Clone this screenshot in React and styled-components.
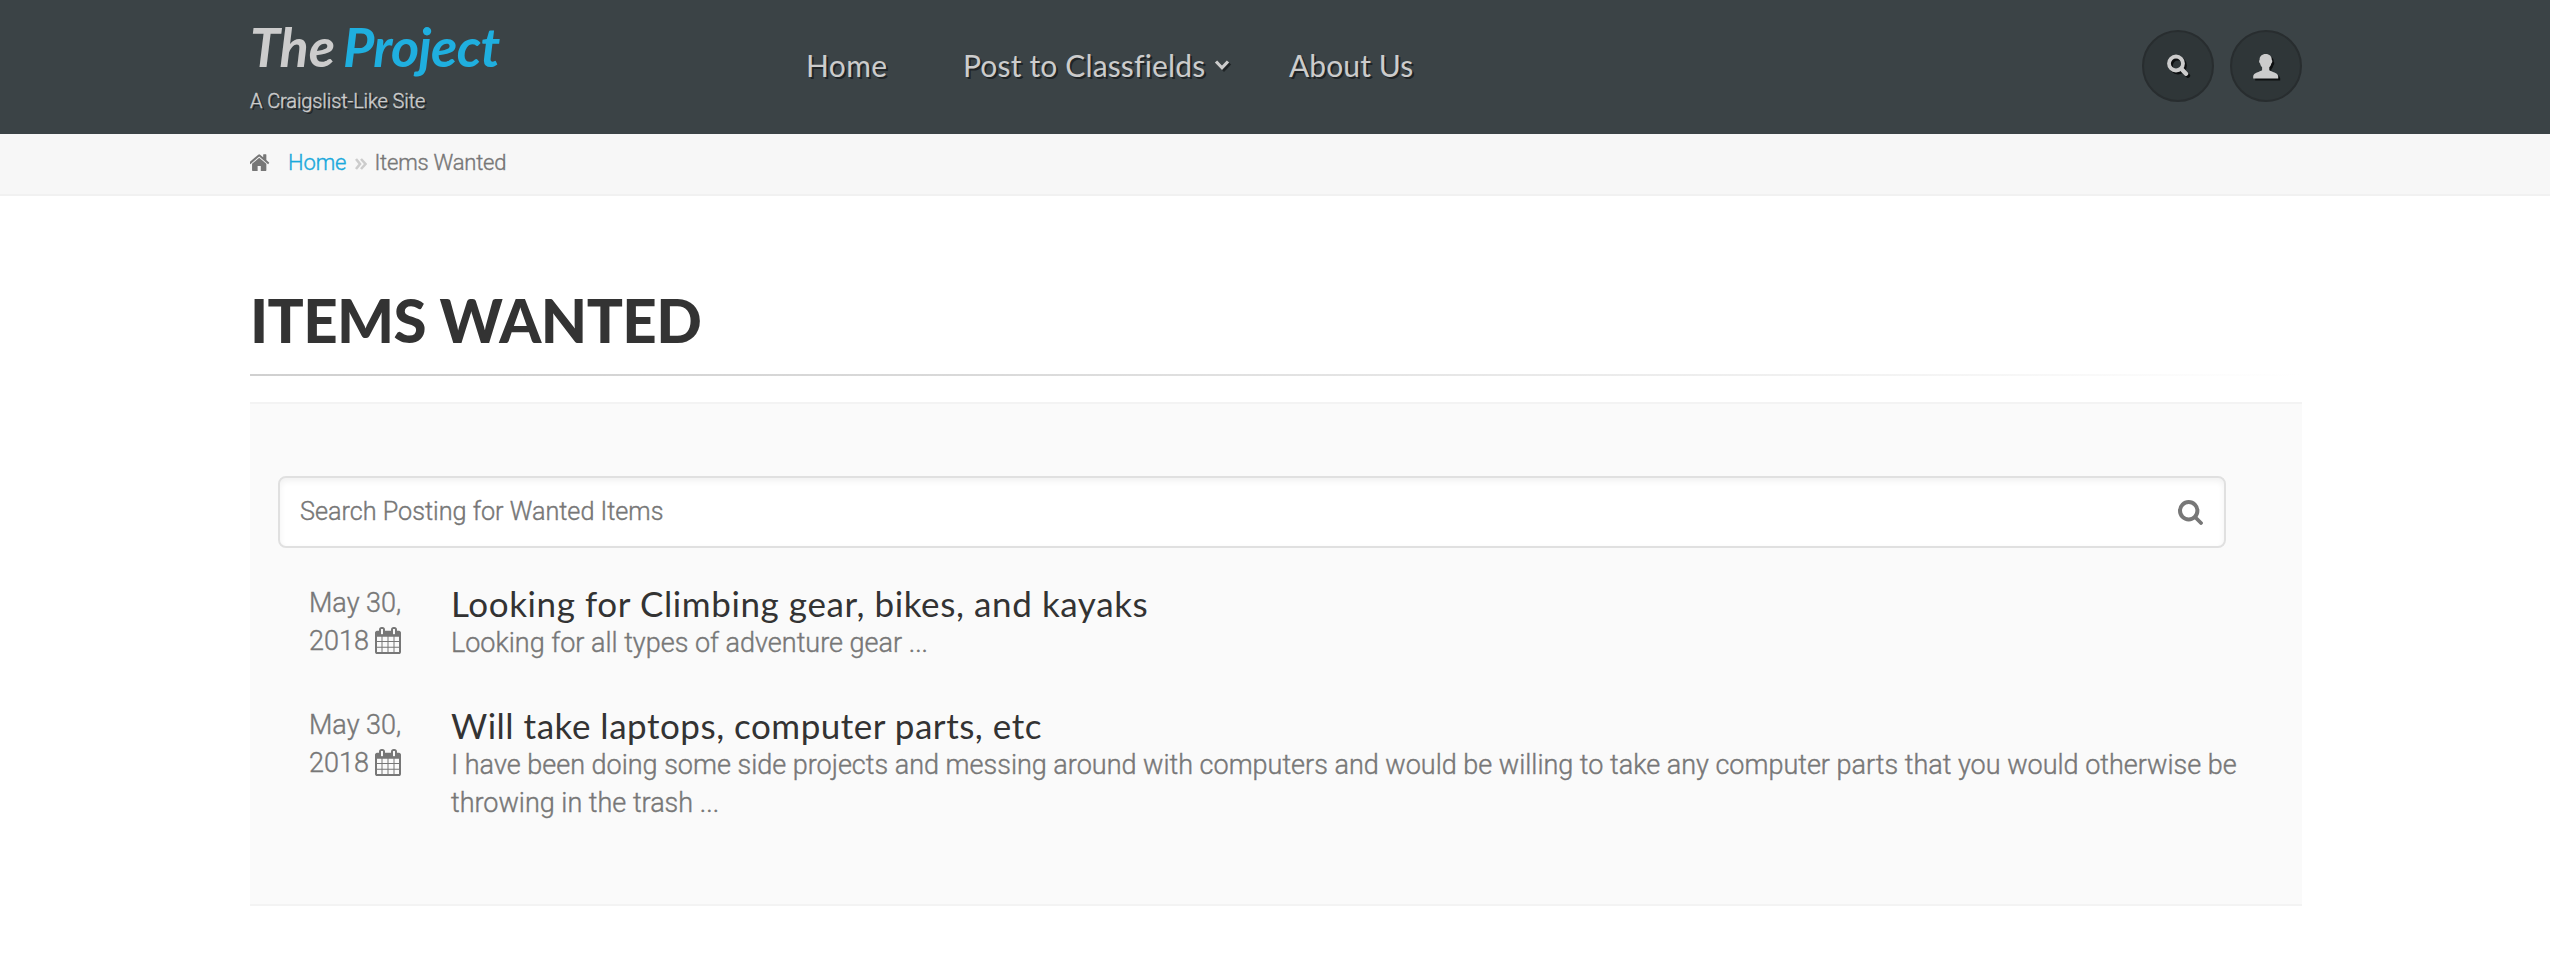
import React from "react";
import styled, { createGlobalStyle } from "styled-components";

const Global = createGlobalStyle`
  * { box-sizing: border-box; }
  body { margin: 0; background: #fff; color: #777; font-family: Roboto, "Liberation Sans", sans-serif; font-weight: 300; }
  h1, h2, p, ul { margin: 0; padding: 0; }
  a { color: inherit; text-decoration: none; }
  svg { display: block; flex: none; }
`;

const Container = styled.div`
  width: 2052px;
  margin: 0 auto;
  position: relative;
  left: 1px;
`;

const Header = styled.header`
  height: 134px;
  background: #3b4346;
  color: #ccc;
`;

const HeaderRow = styled(Container)`
  display: flex;
  align-items: flex-start;
`;

const Brand = styled.div`
  width: 556px;
  padding-top: 12px;
`;

const Logo = styled.div`
  display: flex;
  height: 72px;
  font: italic 700 54px/70px Lato, sans-serif;
  white-space: nowrap;
`;

const LogoWord = styled.span`
  width: ${(p) => p.$width}px;
  color: ${(p) => p.$color};
  letter-spacing: ${(p) => p.$spacing}px;
`;

const Tagline = styled.p`
  font-size: 20px;
  line-height: 34px;
  letter-spacing: ${(p) => p.$spacing}px;
  text-shadow: 2px 2px 0 #1f2426;
  -webkit-text-stroke: 0.4px currentColor;
`;

const Nav = styled.nav`
  display: flex;
  flex: 1;
  padding-top: 45px;
  font: 400 30px/40px Lato, sans-serif;
  text-shadow: 2px 2px 0 #1f2426;
`;

const NavLink = styled.a`
  display: flex;
  align-items: center;
  gap: 9px;
  width: ${(p) => p.$width}px;
  letter-spacing: ${(p) => p.$spacing}px;
  white-space: nowrap;
`;

const Actions = styled.div`
  display: flex;
  gap: 16px;
  padding-top: 30px;
`;

const RoundButton = styled.button`
  display: flex;
  align-items: center;
  justify-content: center;
  width: 72px;
  height: 72px;
  padding: 0;
  border: 2px solid #282d2f;
  border-radius: 50%;
  background: #2f3638;
  color: #ccc;
  svg { filter: drop-shadow(2px 2px 0 #0d0f10); overflow: visible; }
`;

const Crumbs = styled.div`
  height: 62px;
  background: #f7f7f7;
  border-bottom: 2px solid #f1f1f1;
`;

const CrumbRow = styled(Container)`
  display: flex;
  align-items: center;
  height: 56px;
  font-size: 22px;
  -webkit-text-stroke: 0.4px currentColor;
`;

const Crumb = styled.span`
  color: ${(p) => p.$color};
  letter-spacing: ${(p) => p.$spacing}px;
  margin-left: ${(p) => p.$gap}px;
`;

const CrumbArrow = styled.span`
  margin: 3px 0 0 9px;
  color: #ccc;
`;

const Title = styled.h1`
  padding-top: 84px;
  height: 178px;
  color: #333;
  font: 900 60px/80px Lato, sans-serif;
  letter-spacing: ${(p) => p.$spacing}px;
`;

const Rule = styled.div`
  height: 2px;
  background: linear-gradient(to right, #d0d0d0 0%, #d9d9d9 35%, #fff 100%);
`;

const Panel = styled.section`
  height: 504px;
  margin-top: 26px;
  padding: 72px 28px 0;
  background: #fafafa;
  border-top: 2px solid #f3f3f3;
  border-bottom: 2px solid #f3f3f3;
`;

const SearchBox = styled.div`
  display: flex;
  align-items: center;
  justify-content: space-between;
  width: 1948px;
  height: 72px;
  padding: 0 21px 0 20px;
  background: #fff;
  border: 2px solid #e0e0e0;
  border-radius: 8px;
  box-shadow: inset 0 3px 6px rgba(0, 0, 0, 0.06);
  font-size: 25.2px;
  -webkit-text-stroke: 0.4px currentColor;
`;

const Placeholder = styled.span`
  padding-bottom: 2px;
`;

const List = styled.ul`
  padding: 36px 0 0 30px;
  list-style: none;
`;

const Item = styled.li`
  display: flex;
  min-height: 122px;
  font-size: 27px;
  line-height: 38px;
  -webkit-text-stroke: 0.4px currentColor;
`;

const DateCell = styled.div`
  flex: none;
  width: 143px;
  padding-left: 1px;
`;

const DateYear = styled.div`
  display: flex;
  gap: 6px;
  align-items: center;
  svg { margin-top: -2px; }
`;

const ItemTitle = styled.h2`
  height: 40px;
  color: #333;
  font: 400 35px/38px Lato, sans-serif;
  letter-spacing: ${(p) => p.$spacing}px;
  -webkit-text-stroke: 0;
`;

const ItemText = styled.p`
  width: 1800px;
`;

const HomeIcon = () => (
  <svg width="20" height="17" viewBox="90 230 1612 1306" preserveAspectRatio="none" fill="#777">
    <path d="M1408 992v480q0 26-19 45t-45 19h-384v-384h-256v384h-384q-26 0-45-19t-19-45v-480q0-1 .5-3t.5-3l575-474 575 474q1 2 1 6zm223-69l-62 74q-8 9-21 11h-3q-13 0-21-7l-692-577-692 577q-12 8-24 7-13-2-21-11l-62-74q-8-10-7-23.5t11-21.5l719-599q32-26 76-26t76 26l244 204v-195q0-14 9-23t23-9h192q14 0 23 9t9 23v408l219 182q10 8 11 21.5t-7 23.5z" />
  </svg>
);

const CalendarIcon = () => (
  <svg width="26" height="27" viewBox="64 0 1664 1792" preserveAspectRatio="none" fill="#777">
    <path d="M192 1664h288v-288h-288v288zm352 0h320v-288h-320v288zm-352-352h288v-320h-288v320zm352 0h320v-320h-320v320zm-352-384h288v-288h-288v288zm736 736h320v-288h-320v288zm-384-736h320v-288h-320v288zm768 736h288v-288h-288v288zm-384-352h320v-320h-320v320zm-352-864v-288q0-13-9.5-22.5t-22.5-9.5h-64q-13 0-22.5 9.5t-9.5 22.5v288q0 13 9.5 22.5t22.5 9.5h64q13 0 22.5-9.5t9.5-22.5zm736 864h288v-320h-288v320zm-384-384h320v-288h-320v288zm384 0h288v-288h-288v288zm32-480v-288q0-13-9.5-22.5t-22.5-9.5h-64q-13 0-22.5 9.5t-9.5 22.5v288q0 13 9.5 22.5t22.5 9.5h64q13 0 22.5-9.5t9.5-22.5zm384-64v1280q0 52-38 90t-90 38h-1408q-52 0-90-38t-38-90v-1280q0-52 38-90t90-38h128v-96q0-66 47-113t113-47h64q66 0 113 47t47 113v96h384v-96q0-66 47-113t113-47h64q66 0 113 47t47 113v96h128q52 0 90 38t38 90z" />
  </svg>
);

const FieldSearchIcon = () => (
  <svg width="25" height="25" viewBox="0 0 25 25" fill="none" stroke="#777" strokeLinecap="round">
    <circle cx="10.7" cy="10.7" r="8.7" strokeWidth="4" />
    <path d="M17 17l6 6" strokeWidth="3.8" />
  </svg>
);

const HeaderSearchIcon = () => (
  <svg width="22" height="22" viewBox="0 0 22 22" fill="none" stroke="currentColor" strokeLinecap="round">
    <circle cx="9" cy="8.500" r="7" strokeWidth="3.8" />
    <path d="M14.500 14l4.500 4.700" strokeWidth="4.4" />
  </svg>
);

const UserIcon = () => (
  <svg width="26" height="25" viewBox="0 0 26 25" fill="currentColor">
    <path d="M12.700 0C16.500 0 18.800 2.300 18.800 5.700C19.700 6.700 19.300 8.700 18.300 9.500C17.900 11.200 17.300 12.300 16.300 13.200V16.200C18.300 17.800 25.200 18.500 25.200 22.500V24.500H.2V22.500C.2 18.500 7.100 17.800 9.100 16.200V13.200C8.100 12.300 7.500 11.200 7.100 9.500C6.100 8.700 5.700 6.700 6.600 5.700C6.600 2.300 8.900 0 12.700 0z" />
  </svg>
);

const ChevronDown = () => (
  <svg width="18" height="16" viewBox="0 0 18 16" fill="none" stroke="#1f2426" strokeWidth="3.200">
    <path d="M4 6.500l6 6.300l6-6.300" />
    <path d="M2 4.500l6 6.300l6-6.300" stroke="#ccc" />
  </svg>
);

const DoubleChevron = () => (
  <svg width="12" height="12" viewBox="0 0 12 12" fill="none" stroke="currentColor" strokeWidth="2.600">
    <path d="M1 1l4 5l-4 5M6 1l4.500 5l-4.500 5" />
  </svg>
);

const posts = [
  {
    title: "Looking for Climbing gear, bikes, and kayaks",
    titleSpacing: 0.6,
    text: "Looking for all types of adventure gear ...",
  },
  {
    title: "Will take laptops, computer parts, etc",
    titleSpacing: 0.52,
    text: "I have been doing some side projects and messing around with computers and would be willing to take any computer parts that you would otherwise be throwing in the trash ...",
  },
];

export default function App() {
  return (
    <>
      <Global />
      <Header>
        <HeaderRow>
          <Brand>
            <Logo>
              <LogoWord $width={93} $color="#ccc" $spacing={0}>The</LogoWord>
              <LogoWord $width={160} $color="#1fafdf" $spacing={-0.7}>Project</LogoWord>
            </Logo>
            <Tagline $spacing={-0.1}>A Craigslist-Like Site</Tagline>
          </Brand>
          <Nav>
            <NavLink $width={157} $spacing={0.4}>Home</NavLink>
            <NavLink $width={326} $spacing={0.15}>
              Post to Classfields
              <ChevronDown />
            </NavLink>
            <NavLink $width={130} $spacing={0.1}>About Us</NavLink>
          </Nav>
          <Actions>
            <RoundButton aria-label="Search"><HeaderSearchIcon /></RoundButton>
            <RoundButton aria-label="Account"><UserIcon /></RoundButton>
          </Actions>
        </HeaderRow>
      </Header>
      <Crumbs>
        <CrumbRow>
          <HomeIcon />
          <Crumb as="a" $color="#1ba9dc" $gap={18} $spacing={-0.1}>Home</Crumb>
          <CrumbArrow><DoubleChevron /></CrumbArrow>
          <Crumb $color="#777" $gap={7} $spacing={-0.2}>Items Wanted</Crumb>
        </CrumbRow>
      </Crumbs>
      <Container as="main">
        <Title $spacing={-0.6}>ITEMS WANTED</Title>
        <Rule />
        <Panel>
          <SearchBox>
            <Placeholder>Search Posting for Wanted Items</Placeholder>
            <FieldSearchIcon />
          </SearchBox>
          <List>
            {posts.map((post) => (
              <Item key={post.title}>
                <DateCell>
                  <div>May 30,</div>
                  <DateYear>2018 <CalendarIcon /></DateYear>
                </DateCell>
                <div>
                  <ItemTitle $spacing={post.titleSpacing}>{post.title}</ItemTitle>
                  <ItemText>{post.text}</ItemText>
                </div>
              </Item>
            ))}
          </List>
        </Panel>
      </Container>
    </>
  );
}
